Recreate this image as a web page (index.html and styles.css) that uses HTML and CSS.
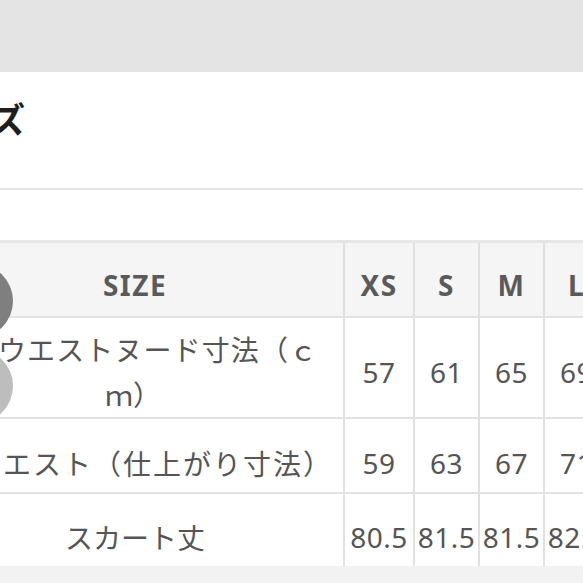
FILE: index.html
```html
<!DOCTYPE html>
<html lang="ja">
<head>
<meta charset="utf-8">
<link rel="stylesheet" href="styles.css">
</head>
<body>
<div class="page">
  <div class="topbar"></div>
  <section class="title"><h2 class="title-text">サイズ</h2></section>
  <div class="gap"></div>
  <div class="table">
    <div class="row head">
      <div class="cell label center">SIZE</div>
      <div class="cell">XS</div>
      <div class="cell">S</div>
      <div class="cell">M</div>
      <div class="cell">L</div>
      <div class="cell">XL</div>
    </div>
    <div class="row tall">
      <div class="cell label stack">
        <span class="line l1">ウエストヌード寸法（ｃ</span>
        <span class="line l2">ｍ）</span>
      </div>
      <div class="cell num">57</div>
      <div class="cell num">61</div>
      <div class="cell num">65</div>
      <div class="cell num">69</div>
      <div class="cell num">73</div>
    </div>
    <div class="row">
      <div class="cell label left r2">ウエスト（仕上がり寸法）</div>
      <div class="cell num">59</div>
      <div class="cell num">63</div>
      <div class="cell num">67</div>
      <div class="cell num">71</div>
      <div class="cell num">75</div>
    </div>
    <div class="row last">
      <div class="cell label center">スカート丈</div>
      <div class="cell num">80.5</div>
      <div class="cell num">81.5</div>
      <div class="cell num">81.5</div>
      <div class="cell num">82.5</div>
      <div class="cell num">83.5</div>
    </div>
  </div>
  <div class="footer"></div>
  <div class="dot dark"></div>
  <div class="dot light"></div>
</div>
</body>
</html>
```
FILE: styles.css
```css
html, body {
  margin: 0;
  padding: 0;
  background: #ffffff;
}
body {
  width: 583px;
  height: 583px;
  overflow: hidden;
  font-family: "Noto Sans", "Noto Sans CJK JP", sans-serif;
}
.page {
  position: relative;
  width: 583px;
  height: 583px;
  overflow: hidden;
}
.topbar {
  height: 72px;
  background: #e4e4e4;
}
.title {
  display: flex;
  align-items: center;
  border-bottom: 2px solid #e4e4e4;
  box-sizing: border-box;
  height: 118px;
}
.title-text {
  margin: 0 0 26px -79px;
  font-family: "Noto Sans CJK JP", sans-serif;
  font-size: 35px;
  font-weight: 700;
  color: #1e1e1e;
  line-height: 1;
  white-space: nowrap;
}
.gap {
  height: 50px;
}
.table {
  margin-left: -73px;
  border-top: 3px solid #e6e6e6;
  width: 750px;
}
.row {
  display: grid;
  grid-template-columns: 418px 70px 65px 65px 65px 65px;
  height: 75px;
  border-bottom: 2px solid #e2e2e2;
  box-sizing: border-box;
  background: #ffffff;
}
.row.head {
  background: #f5f5f5;
}
.row.tall {
  height: 101px;
}
.row.last {
  height: 72px;
  border-bottom: none;
}
.cell {
  display: flex;
  align-items: center;
  justify-content: center;
  padding-top: 14px;
  box-sizing: border-box;
  border-right: 2px solid #e0e0e0;
  font-size: 28px;
  color: #555555;
  white-space: nowrap;
}
.cell.num {
  font-size: 28px;
  letter-spacing: 0.5px;
}
.tall .cell.num {
  padding-top: 8px;
}
.head .cell {
  font-weight: 700;
  font-size: 28px;
  letter-spacing: 1.5px;
  color: #5a5a5a;
  padding-top: 10px;
}
.label {
  font-family: "Noto Sans CJK JP", sans-serif;
}
.head .label {
  font-family: "Noto Sans", "Noto Sans CJK JP", sans-serif;
}
.label.left {
  justify-content: flex-start;
}
.r2 {
  padding-left: 46px;
  letter-spacing: 2px;
}
.label.stack {
  flex-direction: column;
  align-items: flex-start;
  justify-content: center;
  line-height: 45px;
  padding-top: 8px;
}
.line {
  display: block;
}
.l1 {
  margin-left: 71px;
  letter-spacing: 1.1px;
}
.l2 {
  margin-left: 178px;
}
.footer {
  height: 40px;
  background: #f2f2f2;
}
.dot {
  position: absolute;
  border-radius: 50%;
  width: 74px;
  height: 74px;
  left: -61px;
}
.dot.dark {
  top: 264px;
  background: #7f7f7f;
}
.dot.light {
  top: 349px;
  background: #bdbdbd;
}
```
